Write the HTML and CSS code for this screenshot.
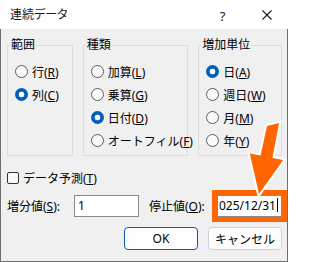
FILE: index.html
```html
<!DOCTYPE html>
<html>
<head>
<meta charset="utf-8">
<title>連続データ</title>
<link rel="stylesheet" href="styles.css">
</head>
<body>
<div class="window">
  <div class="titlebar">
    <span class="title">連続データ</span>
    <span class="help">?</span>
    <span class="close"><svg width="10" height="10" viewBox="0 0 10 10"><path d="M0.5 0.5 L9.5 9.5 M9.5 0.5 L0.5 9.5" stroke="#1a1a1a" stroke-width="1.1" fill="none"/></svg></span>
  </div>
  <div class="body">
    <div class="groups">
      <fieldset class="group g1">
        <legend>範囲</legend>
        <div class="opt"><span class="radio"></span><span>行(<u>R</u>)</span></div>
        <div class="opt"><span class="radio on"></span><span>列(<u>C</u>)</span></div>
      </fieldset>
      <fieldset class="group g2">
        <legend>種類</legend>
        <div class="opt"><span class="radio"></span><span>加算(<u>L</u>)</span></div>
        <div class="opt"><span class="radio"></span><span>乗算(<u>G</u>)</span></div>
        <div class="opt"><span class="radio on"></span><span>日付(<u>D</u>)</span></div>
        <div class="opt"><span class="radio"></span><span>オートフィル(<u>F</u>)</span></div>
      </fieldset>
      <fieldset class="group g3">
        <legend>増加単位</legend>
        <div class="opt"><span class="radio on"></span><span>日(<u>A</u>)</span></div>
        <div class="opt"><span class="radio"></span><span>週日(<u>W</u>)</span></div>
        <div class="opt"><span class="radio"></span><span>月(<u>M</u>)</span></div>
        <div class="opt"><span class="radio"></span><span>年(<u>Y</u>)</span></div>
      </fieldset>
    </div>
    <div class="check"><span class="box"></span><span>データ予測(<u>T</u>)</span></div>
    <div class="fields">
      <span class="flabel">増分値(<u>S</u>):</span>
      <div class="textbox">1</div>
      <span class="flabel second">停止値(<u>O</u>):</span>
      <div class="textbox hl">025/12/31<span class="caret"></span></div>
    </div>
    <div class="buttons">
      <button class="btn default">OK</button>
      <button class="btn">キャンセル</button>
    </div>
  </div>
  <svg class="arrow" width="289" height="262" viewBox="0 0 289 262">
    <polygon points="267,126 279,123 272.4,157.9 283.2,160.1 259,194 249.8,153.4 260.6,155.6" fill="#ff6600" stroke="#ffffff" stroke-width="4" stroke-linejoin="miter" paint-order="stroke"/>
  </svg>
</div>
</body>
</html>
```

FILE: styles.css
```css
body {
  margin: 0;
  background: #ffffff;
  font-family: "Noto Sans", "Noto Sans CJK JP", sans-serif;
  font-size: 12px;
  color: #000;
}

.window {
  position: relative;
  width: 289px;
  height: 262px;
}

.titlebar {
  height: 29px;
  display: flex;
  align-items: center;
  background: #ffffff;
  padding-left: 10px;
}

.title {
  flex: 1;
  line-height: 16px;
  margin-top: 1px;
  font-feature-settings: "palt";
  color: #1a1a1a;
}

.help {
  width: 45px;
  text-align: center;
  font-size: 13px;
  line-height: 16px;
  margin-top: 2px;
  color: #1a1a1a;
}

.close {
  width: 44px;
  display: flex;
  justify-content: center;
  align-items: center;
  margin-top: 1px;
}

.body {
  box-sizing: border-box;
  width: 288px;
  height: 233px;
  background: #f0f0f0;
  border: 1px solid #6e6e6e;
  border-top: none;
  padding: 8px 5px 0 6px;
}

.groups {
  display: flex;
  gap: 10px;
}

.group {
  box-sizing: border-box;
  margin: 0;
  padding: 7px 0 3px 0;
  border: 1px solid #dcdcdc;
  min-width: 0;
}

.g1 { width: 66px; }
.g2 { width: 106px; }
.g3 { width: 84px; }

legend {
  padding: 0 1px;
  margin-left: 2px;
  line-height: 16px;
}

.opt {
  display: flex;
  align-items: center;
  gap: 4px;
  height: 23px;
  padding-left: 7px;
  white-space: nowrap;
}

.opt u, .check u, .flabel u {
  text-underline-offset: 1px;
}

.radio {
  flex: none;
  box-sizing: border-box;
  width: 13px;
  height: 13px;
  border: 1px solid #5c5c5c;
  border-radius: 50%;
  background: #f9f9f9;
}

.radio.on {
  border: none;
  background: radial-gradient(circle, #ffffff 0 2.6px, #005fb8 3.2px);
}

.check {
  display: flex;
  align-items: center;
  gap: 4px;
  height: 20px;
  margin-top: 12px;
}

.box {
  flex: none;
  box-sizing: border-box;
  width: 12px;
  height: 12px;
  border: 1px solid #333333;
  border-radius: 2px;
  background: #f9f9f9;
}

.fields {
  display: flex;
  align-items: center;
  height: 22px;
  margin-top: 7px;
}

.flabel {
  width: 67px;
  white-space: nowrap;
}

.flabel.second {
  margin-left: 10px;
  width: 68px;
}

.textbox {
  box-sizing: border-box;
  width: 65px;
  height: 22px;
  border: 1px solid #8a8a8a;
  background: #ffffff;
  padding-left: 3px;
  line-height: 20px;
  white-space: nowrap;
  overflow: hidden;
}

.textbox.hl {
  padding-left: 1px;
  outline: 5px solid #ff6600;
}

.caret {
  display: inline-block;
  width: 1px;
  height: 14px;
  background: #000;
  vertical-align: -2px;
  margin-left: 1px;
}

.buttons {
  display: flex;
  justify-content: flex-end;
  gap: 10px;
  margin-top: 10px;
}

.btn {
  width: 74px;
  height: 23px;
  box-sizing: border-box;
  padding: 0;
  border: 1px solid #d0d0d0;
  border-radius: 4px;
  background: #fdfdfd;
  font: inherit;
  color: #000;
}

.btn.default {
  border-color: #005fb8;
}

.arrow {
  position: absolute;
  left: 0;
  top: 0;
}
```
